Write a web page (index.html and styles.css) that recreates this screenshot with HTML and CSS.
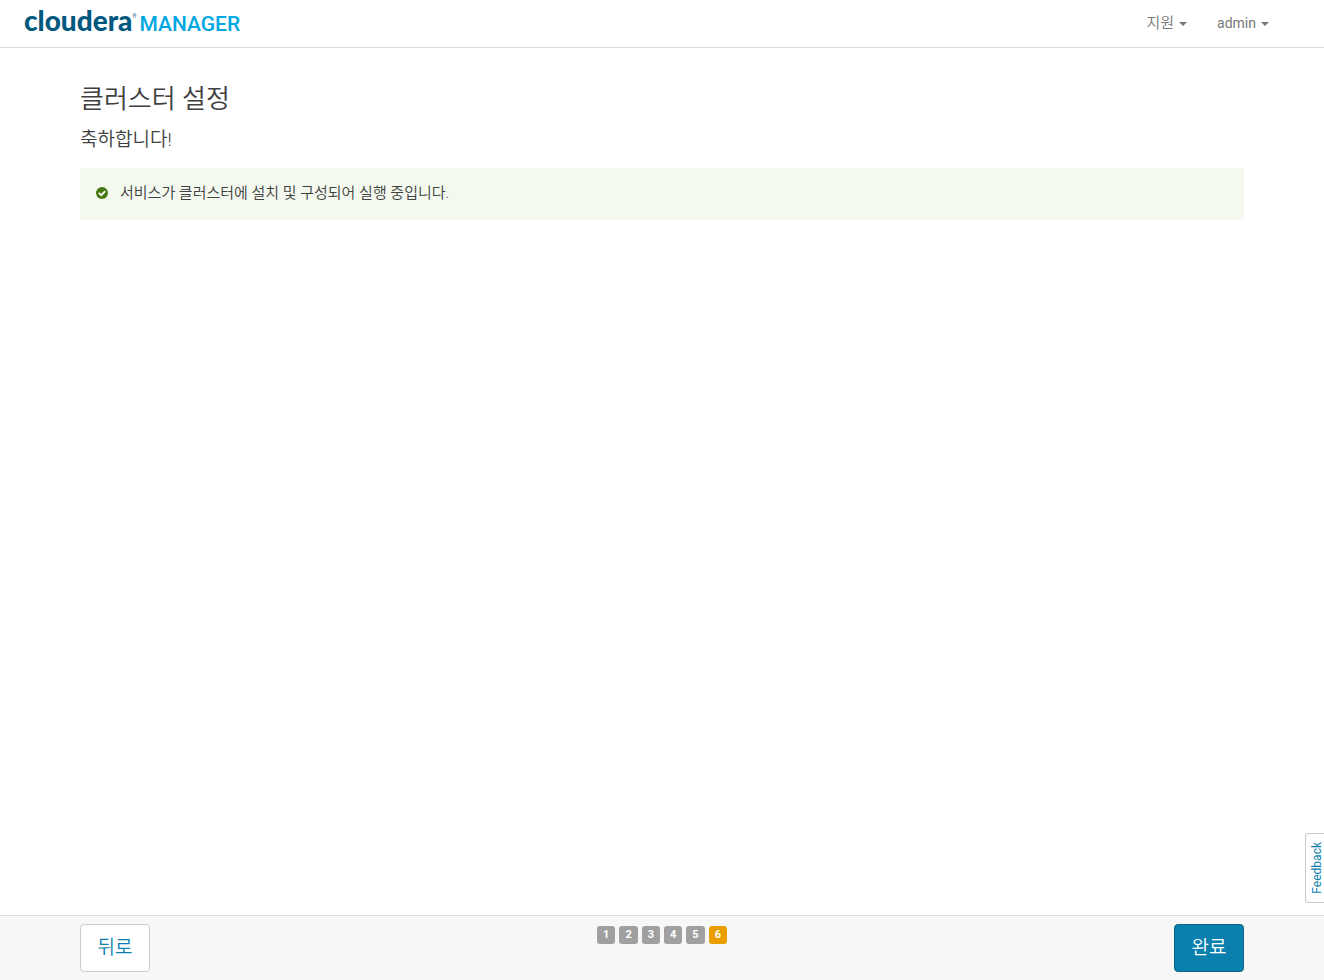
FILE: index.html
```html
<!DOCTYPE html>
<html lang="ko">
<head>
<meta charset="utf-8">
<meta name="viewport" content="width=device-width, initial-scale=1">
<title>클러스터 설정 - Cloudera Manager</title>
<link rel="stylesheet" href="styles.css">
</head>
<body class="page">
  <header class="navbar">
    <a class="brand" href="#"><span class="brand-name">cloudera</span><span class="brand-mark">®</span><span class="brand-product">MANAGER</span></a>
    <nav class="menu">
      <button class="menu-item menu-item-ko" type="button">지원<span class="caret"></span></button>
      <button class="menu-item" type="button">admin<span class="caret"></span></button>
    </nav>
  </header>

  <main class="content">
    <h1 class="title">클러스터 설정</h1>
    <h2 class="subtitle">축하합니다!</h2>
    <div class="alert" role="status">
      <svg class="alert-icon" viewBox="0 0 12 12" aria-hidden="true">
        <circle cx="6" cy="6" r="6" fill="#44790f"/>
        <path d="M2.8 5.8 5.2 8.2 9.3 4.1" fill="none" stroke="#fff" stroke-width="1.9"/>
      </svg>
      <span>서비스가 클러스터에 설치 및 구성되어 실행 중입니다.</span>
    </div>
  </main>

  <footer class="actions">
    <button class="btn" type="button">뒤로</button>
    <ol class="steps">
      <li class="step">1</li>
      <li class="step">2</li>
      <li class="step">3</li>
      <li class="step">4</li>
      <li class="step">5</li>
      <li class="step step-current" aria-current="step">6</li>
    </ol>
    <button class="btn btn-primary" type="button">완료</button>
  </footer>

  <button class="feedback" type="button">Feedback</button>
</body>
</html>
```

FILE: styles.css
```css
* {
  box-sizing: border-box;
}

.page {
  margin: 0;
  min-height: 100vh;
  display: flex;
  flex-direction: column;
  background: #fff;
  color: #404040;
  font-family: Roboto, "Noto Sans CJK KR", sans-serif;
  font-size: 15px;
  line-height: 20px;
}

button {
  font-family: inherit;
  cursor: pointer;
}

.navbar {
  display: flex;
  justify-content: space-between;
  align-items: center;
  height: 48px;
  padding: 0 55px 2px 24px;
  border-bottom: 1px solid #d9d9d9;
}

.brand {
  display: flex;
  align-items: baseline;
  padding-bottom: 2px;
  line-height: 32px;
  text-decoration: none;
}

.brand-name {
  color: #00587f;
  font-family: Lato, sans-serif;
  font-size: 28px;
  font-weight: 900;
}

.brand-mark {
  align-self: flex-start;
  width: 7px;
  color: #00587f;
  font-size: 5px;
  line-height: 24px;
}

.brand-product {
  color: #00a7e0;
  font-size: 21px;
  font-weight: 500;
}

.menu {
  display: flex;
  gap: 30px;
}

.menu-item {
  display: flex;
  align-items: center;
  gap: 5px;
  padding: 0;
  border: 0;
  background: none;
  color: #777;
  font-size: 14px;
  line-height: 20px;
}

.menu-item-ko {
  font-size: 15px;
  font-weight: 350;
}

.caret {
  margin-top: 2px;
  border-top: 4px solid #777;
  border-right: 4px solid transparent;
  border-left: 4px solid transparent;
}

.content {
  flex: 1;
  padding: 33px 80px;
}

.title {
  margin: 0;
  font-size: 26px;
  font-weight: 350;
  line-height: 36px;
}

.subtitle {
  margin: 10px 0 15px;
  font-size: 19px;
  font-weight: 350;
  line-height: 26px;
}

.alert {
  display: flex;
  align-items: center;
  gap: 12px;
  padding: 15px 16px 17px;
  background: #f3f9ee;
  font-weight: 350;
}

.alert-icon {
  width: 12px;
  height: 12px;
}

.actions {
  display: flex;
  justify-content: space-between;
  align-items: flex-start;
  padding: 8px 80px;
  border-top: 1px solid #d9d9d9;
  background: #f7f7f7;
}

.btn {
  min-width: 70px;
  height: 48px;
  padding: 0 16px;
  border: 1px solid #ccc;
  border-radius: 4px;
  background: #fff;
  color: #0b7fad;
  font-size: 19px;
  font-weight: 350;
  line-height: 26px;
}

.btn-primary {
  border-color: #096589;
  background: #0b7fad;
  color: #fff;
}

.steps {
  display: flex;
  gap: 4px;
  margin: 2px 0 0;
  padding: 0;
  list-style: none;
}

.step {
  height: 18px;
  padding: 0 6px;
  border-radius: 3px;
  background: #a0a0a0;
  color: #fff;
  font-size: 11px;
  font-weight: 700;
  line-height: 17px;
  text-align: center;
}

.step-current {
  background: #e99f00;
}

.feedback {
  position: fixed;
  right: 0;
  bottom: 77px;
  padding: 8px 0 8px 4px;
  border: 1px solid #ccc;
  border-right: 0;
  border-radius: 3px 0 0 3px;
  background: #fff;
  color: #0b7fad;
  font-size: 12px;
  line-height: 14px;
  writing-mode: sideways-lr;
}
```
